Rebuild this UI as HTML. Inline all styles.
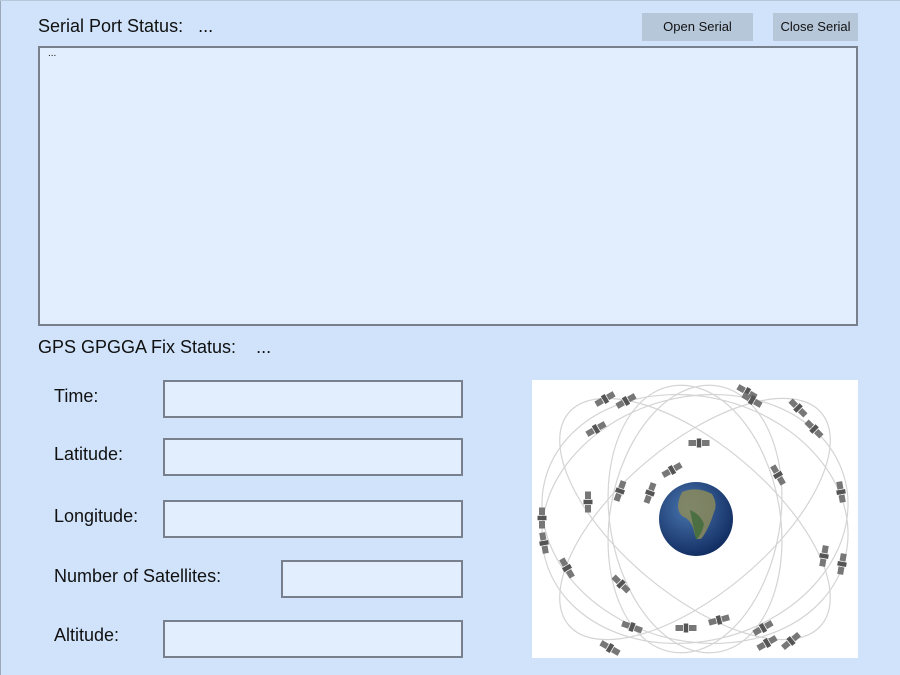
<!DOCTYPE html>
<html><head><meta charset="utf-8">
<style>
*{margin:0;padding:0;box-sizing:border-box}
body{width:900px;height:675px;background:#d0e3fb;font-family:"Liberation Sans",sans-serif;color:#111;position:relative;overflow:hidden}
.t{position:absolute;font-size:18px;white-space:nowrap}
.box{position:absolute;background:#e2eefd;border:2px solid #77808c}
.btn{position:absolute;background:#b6c7da;font-size:13px;text-align:center;line-height:28px;height:28px}
</style></head><body>
<div style="position:absolute;left:0;top:0;width:1px;height:675px;background:#9aa8b8"></div>
<div style="position:absolute;left:0;top:0;width:900px;height:1px;background:#b8c8da"></div>
<div class="t" style="left:38px;top:16px">Serial Port Status:&nbsp;&nbsp; ...</div>
<div class="btn" style="left:642px;top:13px;width:111px">Open Serial</div>
<div class="btn" style="left:773px;top:13px;width:85px">Close Serial</div>
<div class="box" style="left:38px;top:46px;width:820px;height:280px"><div style="position:absolute;left:8px;top:0px;font-size:10px">...</div></div>
<div class="t" style="left:38px;top:337px">GPS GPGGA Fix Status:&nbsp;&nbsp;&nbsp; ...</div>
<div class="t" style="left:54px;top:386px">Time:</div>
<div class="box" style="left:163px;top:380px;width:300px;height:38px"></div>
<div class="t" style="left:54px;top:444px">Latitude:</div>
<div class="box" style="left:163px;top:438px;width:300px;height:38px"></div>
<div class="t" style="left:54px;top:506px">Longitude:</div>
<div class="box" style="left:163px;top:500px;width:300px;height:38px"></div>
<div class="t" style="left:54px;top:566px">Number of Satellites:</div>
<div class="box" style="left:281px;top:560px;width:182px;height:38px"></div>
<div class="t" style="left:54px;top:625px">Altitude:</div>
<div class="box" style="left:163px;top:620px;width:300px;height:38px"></div>
<svg style="position:absolute;left:532px;top:380px" width="326" height="278" viewBox="0 0 326 278">
<rect width="326" height="278" fill="#fff"/>
<defs>
<radialGradient id="e" cx="40%" cy="35%" r="70%"><stop offset="0" stop-color="#4a77b0"/><stop offset="1" stop-color="#0f2a5e"/></radialGradient>
<g id="s" transform="scale(1.5)"><rect x="-7" y="-2" width="5" height="4" fill="#777"/><rect x="-1.5" y="-3" width="3" height="6" fill="#555"/><rect x="2" y="-2" width="5" height="4" fill="#777"/></g>
</defs>
<g fill="none" stroke="#d4d4d4" stroke-width="1.2">
<ellipse cx="163" cy="139" rx="155" ry="122" transform="rotate(15 163 139)"/>
<ellipse cx="163" cy="139" rx="155" ry="122" transform="rotate(-15 163 139)"/>
<ellipse cx="163" cy="139" rx="165" ry="75" transform="rotate(40 163 139)"/>
<ellipse cx="163" cy="139" rx="165" ry="75" transform="rotate(-40 163 139)"/>
<ellipse cx="163" cy="139" rx="135" ry="85" transform="rotate(80 163 139)"/>
<ellipse cx="163" cy="139" rx="135" ry="85" transform="rotate(100 163 139)"/>
</g>
<circle cx="164" cy="139" r="37" fill="url(#e)"/>
<path d="M150 112 q15 -6 30 2 q6 10 2 18 q-4 14 -12 26 q-6 4 -8 -6 q-2 -12 -12 -16 q-8 -8 0 -24z" fill="#8a8a5a" opacity=".85"/>
<path d="M158 130 q10 4 14 14 q-2 10 -8 16" fill="#3f6a3a" opacity=".8"/>
<g>
<use href="#s" transform="translate(73 19) rotate(-30)"/><use href="#s" transform="translate(94 21) rotate(-30)"/>
<use href="#s" transform="translate(64 49) rotate(-30)"/><use href="#s" transform="translate(215 12) rotate(30)"/>
<use href="#s" transform="translate(220 20) rotate(30)"/><use href="#s" transform="translate(266 28) rotate(45)"/>
<use href="#s" transform="translate(282 49) rotate(45)"/><use href="#s" transform="translate(167 63)"/>
<use href="#s" transform="translate(140 90) rotate(-30)"/><use href="#s" transform="translate(246 95) rotate(60)"/>
<use href="#s" transform="translate(118 113) rotate(-70)"/><use href="#s" transform="translate(88 111) rotate(-70)"/>
<use href="#s" transform="translate(56 122) rotate(-90)"/><use href="#s" transform="translate(309 112) rotate(80)"/>
<use href="#s" transform="translate(10 138) rotate(90)"/><use href="#s" transform="translate(12 163) rotate(80)"/>
<use href="#s" transform="translate(35 188) rotate(60)"/><use href="#s" transform="translate(292 176) rotate(-80)"/>
<use href="#s" transform="translate(310 184) rotate(-80)"/><use href="#s" transform="translate(89 204) rotate(45)"/>
<use href="#s" transform="translate(100 247) rotate(20)"/><use href="#s" transform="translate(154 248)"/>
<use href="#s" transform="translate(187 240) rotate(-15)"/><use href="#s" transform="translate(231 248) rotate(-30)"/>
<use href="#s" transform="translate(235 263) rotate(-30)"/><use href="#s" transform="translate(259 261) rotate(-40)"/>
<use href="#s" transform="translate(78 268) rotate(30)"/>
</g>
</svg>
</body></html>
